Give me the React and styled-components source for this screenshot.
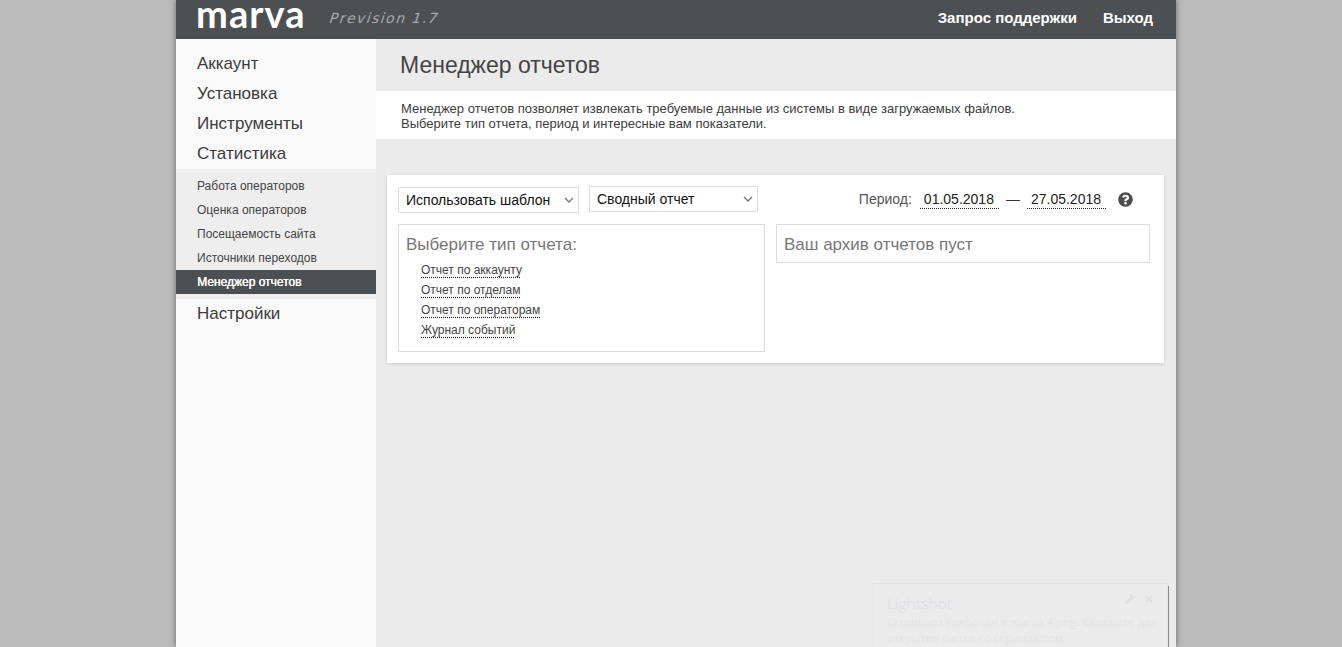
import React from 'react';
import styled, { createGlobalStyle } from 'styled-components';
import { FaQuestionCircle, FaWrench, FaTimes } from 'react-icons/fa';

const GlobalStyle = createGlobalStyle`
    html, body {
        margin: 0;
        height: 100%;
        overflow: hidden;
        background: #bababa;
        font-family: "Liberation Sans", Arial, sans-serif;
    }
`;

const Page = styled.div`
    position: relative;
    width: 1000px;
    height: 647px;
    margin: 0 auto;
    transform: translateX(5px);
    display: flex;
    flex-direction: column;
    box-shadow: 0 0 6px rgba(0, 0, 0, .45);
`;

const Header = styled.header`
    height: 39px;
    flex: none;
    display: flex;
    align-items: center;
    background: #4d5053;
    padding: 0 23px 0 20px;
`;

const Logo = styled.div`
    align-self: flex-start;
    font-family: Lato, sans-serif;
    font-weight: 700;
    font-size: 38px;
    line-height: 26px;
    height: 26px;
    letter-spacing: 1.1px;
    color: #fff;
    width: 109px;
`;

const Version = styled.div`
    font-family: "DejaVu Sans", sans-serif;
    font-style: italic;
    font-weight: 200;
    font-size: 14px;
    letter-spacing: 1.45px;
    color: #a8aaac;
    margin: -4px 0 0 25px;
    transform: skewX(-8deg);
`;

const HeaderLinks = styled.nav`
    margin-left: auto;
    display: flex;
    gap: 26px;
    margin-top: -5px;
`;

const HeaderLink = styled.a`
    color: #fff;
    font-size: 15px;
    font-weight: 700;
`;

const Body = styled.div`
    flex: 1;
    display: flex;
    min-height: 0;
`;

const Sidebar = styled.aside`
    width: 200px;
    flex: none;
    background: #f9f9f9;
    padding-top: 10px;
    box-shadow: 1px 0 2px rgba(0, 0, 0, .06);
`;

const MenuItem = styled.div`
    height: 30px;
    line-height: 30px;
    padding-left: 21px;
    font-size: 17px;
    color: #3c3c3c;
`;

const SubMenu = styled.div`
    background: #eeeeee;
    padding: 5px 0;
`;

const SubItem = styled.div`
    height: 24px;
    line-height: 24px;
    padding-left: 21px;
    font-size: 12px;
    color: ${p => (p.$active ? '#fff' : '#444')};
    background: ${p => (p.$active ? '#4d5053' : 'transparent')};
    text-shadow: ${p => (p.$active ? '.4px 0 0 #fff' : 'none')};
`;

const Main = styled.main`
    flex: 1;
    background: #ebebeb;
    min-width: 0;
`;

const TitleBar = styled.h1`
    margin: 0;
    height: 52px;
    line-height: 52px;
    padding-left: 24px;
    font-size: 23px;
    font-weight: 400;
    color: #444;
`;

const Intro = styled.p`
    margin: 0;
    height: 48px;
    box-sizing: border-box;
    padding: 10px 0 0 25px;
    background: #fff;
    font-size: 13px;
    line-height: 15px;
    color: #3c3c3c;
`;

const Card = styled.section`
    margin: 36px 12px 0 11px;
    height: 188px;
    box-sizing: border-box;
    padding: 11px 14px 0 11px;
    background: #fff;
    box-shadow: 0 1px 3px rgba(0, 0, 0, .15);
`;

const Toolbar = styled.div`
    display: flex;
    align-items: flex-start;
    height: 27px;
`;

const SelectWrap = styled.div`
    position: relative;
    width: ${p => p.$width}px;
    margin-top: ${p => p.$offset || 0}px;
    margin-right: 10px;
    color: #777;

    svg {
        position: absolute;
        right: 5px;
        top: 10px;
    }
`;

const Select = styled.select`
    display: block;
    width: 100%;
    height: 26px;
    box-sizing: border-box;
    appearance: none;
    border: 1px solid #dddddd;
    border-radius: 0;
    background: #fff;
    padding: 0 0 0 7px;
    font-family: inherit;
    font-size: 14px;
    color: #111;
    outline: none;
`;

const Period = styled.div`
    margin-left: auto;
    display: flex;
    align-items: center;
    height: 26px;
    font-size: 14px;
    color: #555;
    padding-right: 17px;
`;

const DateValue = styled.span`
    margin: 2px 0 0 8px;
    padding: 0 5px 0 4px;
    line-height: 17px;
    border-bottom: 1px dotted #222;
    color: #222;
`;

const Dash = styled.span`
    margin-left: 7px;
    margin-right: -1px;
    color: #333;
`;

const Help = styled.span`
    display: flex;
    margin-left: 12px;
    color: #4d4d4d;
    font-size: 15px;
`;

const Panels = styled.div`
    display: flex;
    align-items: flex-start;
    gap: 11px;
    margin-top: 11px;
`;

const Panel = styled.div`
    width: ${p => p.$width}px;
    height: ${p => p.$height}px;
    box-sizing: border-box;
    border: 1px solid #dddddd;
    padding: 10px 7px 0;
`;

const PanelTitle = styled.div`
    font-size: 17px;
    line-height: 20px;
    color: #777;
`;

const ReportList = styled.div`
    display: flex;
    flex-direction: column;
    align-items: flex-start;
    padding: 5px 0 0 15px;
`;

const ReportLink = styled.a`
    height: 20px;
    box-sizing: border-box;
    font-size: 12px;
    line-height: 15px;
    padding-top: 3px;
    color: #444;
    text-decoration: underline dotted #222;
    text-underline-offset: 3px;
`;

/* the faded Lightshot notice lies over the page */
const Toast = styled.div`
    position: absolute;
    left: 697px;
    top: 583px;
    width: 295px;
    height: 64px;
    box-sizing: border-box;
    padding: 9px 5px 0 13px;
    border: 1px solid #e5e5e5;
    border-bottom: 0;
    box-shadow: 2px 2px 0 -1px #8a8a8a;
    font-family: "Open Sans", sans-serif;
    color: #e3e3e5;
`;

const ToastTitle = styled.div`
    font-size: 15px;
    line-height: 20px;
    color: #e0e0e6;
`;

const ToastText = styled.div`
    font-size: 11.3px;
    line-height: 16px;
    margin-top: 1px;
    white-space: nowrap;
`;

const ToastIcons = styled.div`
    position: absolute;
    top: 10px;
    right: 13px;
    display: flex;
    gap: 9px;
    font-size: 10px;
    color: #dedede;
`;

const Chevron = () => (
    <svg width="10" height="6" viewBox="0 0 10 6" fill="none">
        <path d="M1 1l4 4 4-4" stroke="currentColor" strokeWidth="1.4" />
    </svg>
);

const App = () => {
    return (
        <>
            <GlobalStyle />
            <Page>
                <Header>
                    <Logo>marva</Logo>
                    <Version>Prevision 1.7</Version>
                    <HeaderLinks>
                        <HeaderLink>Запрос поддержки</HeaderLink>
                        <HeaderLink>Выход</HeaderLink>
                    </HeaderLinks>
                </Header>
                <Body>
                    <Sidebar>
                        <MenuItem>Аккаунт</MenuItem>
                        <MenuItem>Установка</MenuItem>
                        <MenuItem>Инструменты</MenuItem>
                        <MenuItem>Статистика</MenuItem>
                        <SubMenu>
                            <SubItem>Работа операторов</SubItem>
                            <SubItem>Оценка операторов</SubItem>
                            <SubItem>Посещаемость сайта</SubItem>
                            <SubItem>Источники переходов</SubItem>
                            <SubItem $active>Менеджер отчетов</SubItem>
                        </SubMenu>
                        <MenuItem>Настройки</MenuItem>
                    </Sidebar>
                    <Main>
                        <TitleBar>Менеджер отчетов</TitleBar>
                        <Intro>
                            Менеджер отчетов позволяет извлекать требуемые данные из системы в виде загружаемых файлов.
                            <br />
                            Выберите тип отчета, период и интересные вам показатели.
                        </Intro>
                        <Card>
                            <Toolbar>
                                <SelectWrap $width={181} $offset={1}>
                                    <Select defaultValue="t">
                                        <option value="t">Использовать шаблон</option>
                                    </Select>
                                    <Chevron />
                                </SelectWrap>
                                <SelectWrap $width={169}>
                                    <Select defaultValue="s">
                                        <option value="s">Сводный отчет</option>
                                    </Select>
                                    <Chevron />
                                </SelectWrap>
                                <Period>
                                    Период:
                                    <DateValue>01.05.2018</DateValue>
                                    <Dash>—</Dash>
                                    <DateValue>27.05.2018</DateValue>
                                    <Help><FaQuestionCircle /></Help>
                                </Period>
                            </Toolbar>
                            <Panels>
                                <Panel $width={367} $height={128}>
                                    <PanelTitle>Выберите тип отчета:</PanelTitle>
                                    <ReportList>
                                        <ReportLink>Отчет по аккаунту</ReportLink>
                                        <ReportLink>Отчет по отделам</ReportLink>
                                        <ReportLink>Отчет по операторам</ReportLink>
                                        <ReportLink>Журнал событий</ReportLink>
                                    </ReportList>
                                </Panel>
                                <Panel $width={374} $height={39}>
                                    <PanelTitle>Ваш архив отчетов пуст</PanelTitle>
                                </Panel>
                            </Panels>
                        </Card>
                    </Main>
                </Body>
                <Toast>
                    <ToastIcons><FaWrench /><FaTimes /></ToastIcons>
                    <ToastTitle>Lightshot</ToastTitle>
                    <ToastText>
                        Скриншот сохранён в marva 4.png. Кликните для
                        <br />
                        открытия папки со скриншотом.
                    </ToastText>
                </Toast>
            </Page>
        </>
    );
};

export default App;
